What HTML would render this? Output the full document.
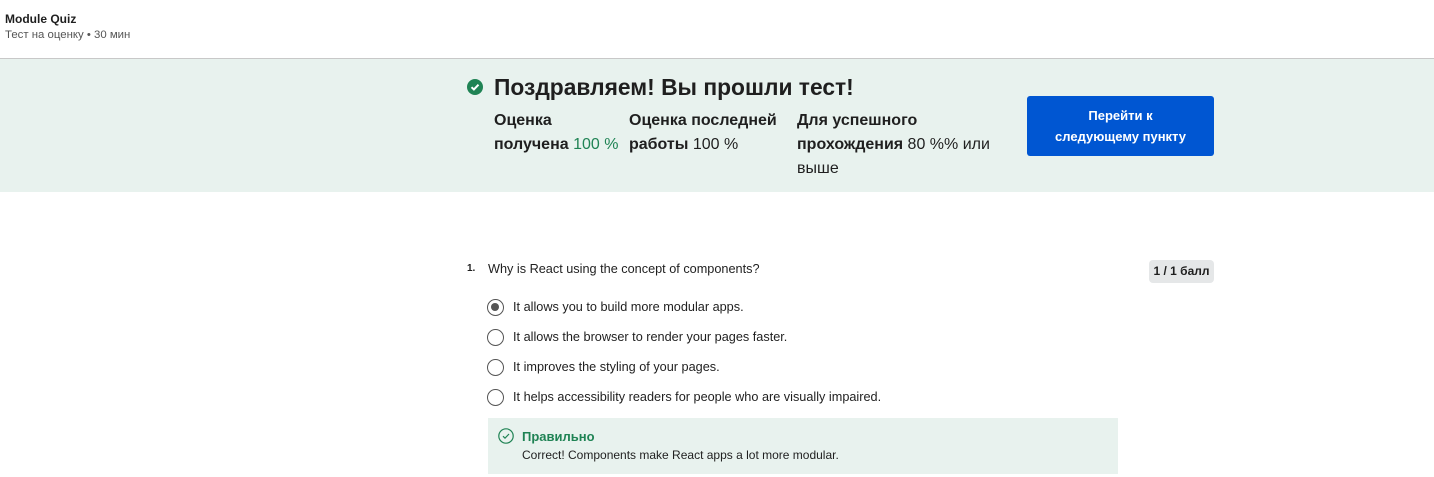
<!DOCTYPE html>
<html><head><meta charset="utf-8"><style>
*{margin:0;padding:0;box-sizing:border-box}
body{width:1434px;height:477px;overflow:hidden;background:#fff;font-family:"Liberation Sans",sans-serif;color:#1f1f1f;position:relative}
.a{position:absolute;white-space:nowrap}
.hdr{height:59px;border-bottom:1px solid #c8c8c8}
.band{position:absolute;top:59px;left:0;width:1434px;height:133px;background:#e8f2ee}
.st{font-size:16px;line-height:24px;white-space:normal}
.st b{font-weight:bold}
.btn{position:absolute;left:1027px;top:96px;width:187px;height:60px;background:#0056d2;border-radius:3px;color:#fff;font-weight:bold;font-size:13px;line-height:21px;text-align:center;padding-top:9px}
.opt{font-size:12.7px;left:513px}
.r{position:absolute;left:487px;width:17px;height:17px;border:1.5px solid #555;border-radius:50%}
</style></head><body>
<div class="hdr"></div>
<div class="a" style="left:5px;top:12px;font-size:12px;font-weight:bold;color:#1f1f1f">Module Quiz</div>
<div class="a" style="left:5px;top:29px;font-size:11.4px;color:#555">Тест на оценку • 30 мин</div>
<div class="band"></div>
<svg class="a" style="left:467px;top:79px" width="16" height="16" viewBox="0 0 16 16"><circle cx="8" cy="8" r="8" fill="#1f8354"/><path d="M4.5 8.2l2.4 2.3 4.6-4.8" stroke="#fff" stroke-width="2" fill="none"/></svg>
<div class="a" style="left:494px;top:74px;font-size:22.8px;font-weight:bold">Поздравляем! Вы прошли тест!</div>
<div class="a st" style="left:494px;top:109px;width:130px"><b>Оценка получена</b> <span style="color:#1f8354">100 %</span></div>
<div class="a st" style="left:629px;top:109px;width:160px"><b>Оценка последней работы</b> 100 %</div>
<div class="a st" style="left:797px;top:109px;width:210px"><b>Для успешного прохождения</b> 80 %% или выше</div>
<div class="btn">Перейти к<br>следующему пункту</div>
<div class="a" style="left:467px;top:263px;font-size:10px;font-weight:bold">1.</div>
<div class="a" style="left:488px;top:262px;font-size:12.7px">Why is React using the concept of components?</div>
<div class="a" style="left:1149px;top:260px;width:65px;height:23px;background:#e5e7e8;border-radius:4px;font-size:12px;font-weight:bold;text-align:center;line-height:23px">1 / 1 балл</div>
<div class="r" style="top:299px"><div style="position:absolute;left:3px;top:3px;width:8px;height:8px;border-radius:50%;background:#555"></div></div>
<div class="a opt" style="top:300px">It allows you to build more modular apps.</div>
<div class="r" style="top:329px"></div>
<div class="a opt" style="top:330px">It allows the browser to render your pages faster.</div>
<div class="r" style="top:359px"></div>
<div class="a opt" style="top:360px">It improves the styling of your pages.</div>
<div class="r" style="top:389px"></div>
<div class="a opt" style="top:390px">It helps accessibility readers for people who are visually impaired.</div>
<div class="a" style="left:488px;top:418px;width:630px;height:56px;background:#e8f2ee"></div>
<svg class="a" style="left:498px;top:428px" width="16" height="16" viewBox="0 0 16 16"><circle cx="8" cy="8" r="7.2" stroke="#1f8354" stroke-width="1.2" fill="none"/><path d="M5 8.2l2 2 4-4.2" stroke="#1f8354" stroke-width="1.2" fill="none"/></svg>
<div class="a" style="left:522px;top:429px;font-size:13px;font-weight:bold;color:#1f8354">Правильно</div>
<div class="a" style="left:522px;top:448px;font-size:12px">Correct! Components make React apps a lot more modular.</div>
</body></html>
